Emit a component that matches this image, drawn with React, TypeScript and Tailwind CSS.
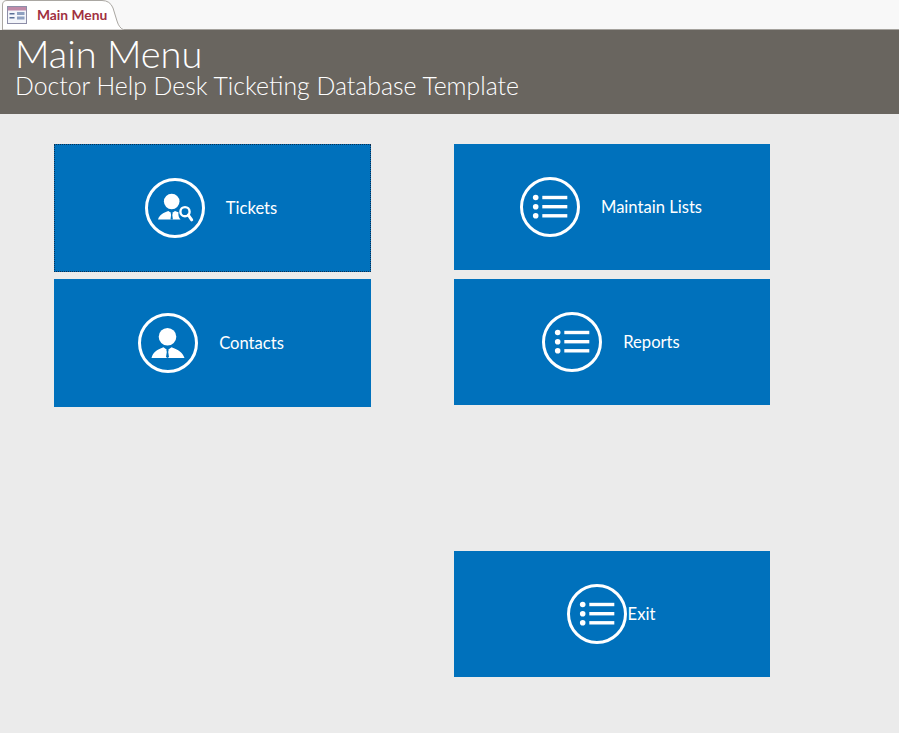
import React from 'react';

// Lingkaran dengan daftar tiga baris
function ListIcon() {
  return (
    <svg width="60" height="60" viewBox="0 0 60 60" className="shrink-0">
      <circle cx="30" cy="30" r="28.5" fill="none" stroke="#fff" strokeWidth="3" />
      <circle cx="15.7" cy="20.5" r="2.8" fill="#fff" />
      <circle cx="15.7" cy="29.7" r="2.8" fill="#fff" />
      <circle cx="15.7" cy="38.8" r="2.8" fill="#fff" />
      <rect x="22.3" y="18.8" width="25" height="3.4" fill="#fff" />
      <rect x="22.3" y="28" width="25" height="3.4" fill="#fff" />
      <rect x="22.3" y="37.1" width="25" height="3.4" fill="#fff" />
    </svg>
  );
}

function ContactIcon() {
  return (
    <svg width="60" height="60" viewBox="0 0 60 60" className="shrink-0">
      <circle cx="30" cy="30" r="28.5" fill="none" stroke="#fff" strokeWidth="3" />
      <circle cx="29.5" cy="23.7" r="8.8" fill="#fff" />
      <path d="M13.5 45 C15 39 18.5 37 25.5 34.2 L29.5 37.2 L33.5 34.2 C40.5 37 44.5 39 46.5 45 Z" fill="#fff" />
      <path d="M28.3 36.8 H30.7 L30.2 39 L31 44 L29.5 45 L28 44 L28.8 39 Z" fill="#0071bc" />
    </svg>
  );
}

function TicketIcon() {
  return (
    <svg width="60" height="60" viewBox="0 0 60 60" className="shrink-0">
      <circle cx="30" cy="30" r="28.5" fill="none" stroke="#fff" strokeWidth="3" />
      <circle cx="26.7" cy="23.5" r="7.8" fill="#fff" />
      <path d="M13 41.5 C14.5 36.8 18 35 23.3 33 L26.7 35.2 L30 33 C31.5 33.5 32.5 33.8 33.5 34.3 C33 37 33.8 39.6 35.5 41.5 Z" fill="#fff" />
      <path d="M25.7 35 H27.7 L27.3 37 L27.9 41.5 H25.5 L26.1 37 Z" fill="#0071bc" />
      <circle cx="40" cy="33.7" r="4.6" fill="none" stroke="#fff" strokeWidth="2.4" />
      <path d="M43.3 37 L46.7 41.8" stroke="#fff" strokeWidth="3" strokeLinecap="round" />
    </svg>
  );
}

function MenuButton({
  label,
  icon,
  tall,
  focused,
  gap = 'gap-[21px]',
  extra = '',
}: {
  label: string;
  icon: React.ReactNode;
  tall?: boolean;
  focused?: boolean;
  gap?: string;
  extra?: string;
}) {
  return (
    <button
      type="button"
      className={`flex w-full items-center justify-center bg-[#0071bc] text-[16.6px] text-white ${gap} ${
        tall ? 'h-[128px] pr-[3px]' : 'h-[126px] pr-[2px]'
      } ${focused ? 'border border-dotted border-[#0b2f52]' : ''} ${extra}`}
    >
      {icon}
      <span>{label}</span>
    </button>
  );
}

export default function App() {
  return (
    <main className="flex min-h-[733px] flex-col bg-[#ebebeb] font-['Lato','Open_Sans',sans-serif]">
      {/* Tab bar */}
      <div className="flex h-[30px] items-end bg-[#f8f8f8] pl-[2px]">
        <div className="relative flex h-[30px] w-[122px] items-center">
          <svg width="122" height="30" viewBox="0 0 122 30" className="absolute top-0 left-0">
            <path
              d="M0.5 30 V5 Q0.5 0.5 5 0.5 H100 Q108 0.5 111 8 L115 21 Q117 28 122 30 Z"
              fill="#fff"
              stroke="#aaa7a2"
            />
          </svg>
          <svg width="20" height="18" viewBox="0 0 20 18" className="relative ml-[5px]">
            <rect x="0.5" y="0.5" width="19" height="17" fill="#f3f5fa" stroke="#8d8ea8" />
            <rect x="1" y="1" width="18" height="3.5" fill="#c08aa8" />
            <rect x="2.5" y="7" width="5" height="1.5" fill="#5a6f96" />
            <rect x="2.5" y="11" width="5" height="1.5" fill="#5a6f96" />
            <rect x="10" y="6" width="7.5" height="3" fill="#8ea0c0" />
            <rect x="10" y="10.5" width="7.5" height="3" fill="#8ea0c0" />
          </svg>
          <span className="relative ml-[10px] text-[13.8px] leading-none font-bold text-[#a1303f]">Main Menu</span>
        </div>
        <div className="h-px flex-1 bg-[#a5a29d]" />
      </div>

      {/* Header */}
      <header className="flex h-[84px] flex-col bg-[#69655f] pt-[4px] pl-[15px] text-white">
        <h1 className="text-[38px] leading-[38px] font-light">Main Menu</h1>
        <p className="text-[24.8px] leading-[27px] font-light">Doctor Help Desk Ticketing Database Template</p>
      </header>

      {/* Tombol menu */}
      <div className="flex items-start gap-[83px] pt-[30px] pl-[54px]">
        <div className="flex w-[317px] flex-col gap-[7px]">
          <MenuButton label="Tickets" icon={<TicketIcon />} tall focused />
          <MenuButton label="Contacts" icon={<ContactIcon />} tall />
        </div>
        <div className="flex w-[316px] flex-col gap-[9px]">
          <MenuButton label="Maintain Lists" icon={<ListIcon />} />
          <MenuButton label="Reports" icon={<ListIcon />} />
          <MenuButton label="Exit" icon={<ListIcon />} gap="gap-px" extra="mt-[137px]" />
        </div>
      </div>
    </main>
  );
}
